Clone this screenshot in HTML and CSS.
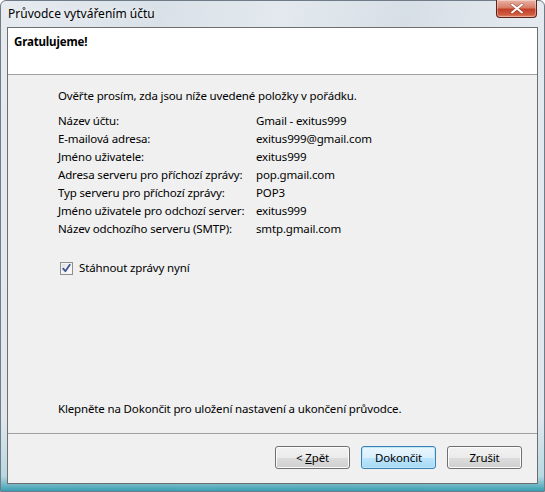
FILE: index.html
```html
<!DOCTYPE html>
<html lang="cs">
<head>
<meta charset="utf-8">
<title>Průvodce vytvářením účtu</title>
<link rel="stylesheet" href="styles.css">
</head>
<body>
<div class="window">
  <div class="titlebar">
    <span class="title">Průvodce vytvářením účtu</span>
    <div class="close" aria-label="Zavřít">
      <svg width="14" height="11" viewBox="0 0 14 11"><path d="M2 1.5 L12 9.5 M12 1.5 L2 9.5" stroke="#6b2a1f" stroke-width="3.2" stroke-linecap="round" opacity="0.45"/><path d="M2 1.5 L12 9.5 M12 1.5 L2 9.5" stroke="#ffffff" stroke-width="2" stroke-linecap="round"/></svg>
    </div>
  </div>
  <div class="client">
    <div class="header">
      <h1 class="heading">Gratulujeme!</h1>
    </div>
    <div class="content">
      <p class="intro">Ověřte prosím, zda jsou níže uvedené položky v pořádku.</p>
      <div class="summary">
        <span>Název účtu:</span><span>Gmail - exitus999</span>
        <span>E-mailová adresa:</span><span>exitus999@gmail.com</span>
        <span>Jméno uživatele:</span><span>exitus999</span>
        <span>Adresa serveru pro příchozí zprávy:</span><span>pop.gmail.com</span>
        <span>Typ serveru pro příchozí zprávy:</span><span>POP3</span>
        <span>Jméno uživatele pro odchozí server:</span><span>exitus999</span>
        <span>Název odchozího serveru (SMTP):</span><span>smtp.gmail.com</span>
      </div>
      <label class="check">
        <span class="box">
          <svg width="11" height="11" viewBox="0 0 11 11"><path d="M2.2 5.6 L4.4 8.2 L8.8 1.8" fill="none" stroke="#3e5596" stroke-width="1.8" stroke-linejoin="round" stroke-linecap="round"/></svg>
        </span>
        <span>Stáhnout zprávy nyní</span>
      </label>
      <p class="finish-note">Klepněte na Dokončit pro uložení nastavení a ukončení průvodce.</p>
    </div>
    <div class="footer">
      <button class="btn">&lt; <u>Z</u>pět</button>
      <button class="btn btn-default">Dokončit</button>
      <button class="btn btn-cancel">Zrušit</button>
    </div>
  </div>
</div>
</body>
</html>
```

FILE: styles.css
```css
* { box-sizing: border-box; }
html, body { margin: 0; padding: 0; }
body {
  width: 545px;
  height: 492px;
  overflow: hidden;
  font-family: "Noto Sans", "Open Sans", sans-serif;
  font-size: 11.5px;
  letter-spacing: -0.15px;
  color: #000;
  background: #ffffff;
}
.window {
  width: 545px;
  height: 492px;
  display: flex;
  flex-direction: column;
  border: 1px solid #6f7b86;
  border-radius: 6px 6px 0 0;
  background:
    linear-gradient(180deg, rgba(255,255,255,0) 85%, rgba(110,190,205,0.35) 97%, #3a9fb2 100%),
    linear-gradient(100deg, #e6ebf0 0%, #d9e1e8 25%, #e3e9ee 45%, #d7dfe6 65%, #e4eaef 85%, #dfe7ee 100%);
}
.titlebar {
  height: 26px;
  flex: none;
  display: flex;
  justify-content: space-between;
  align-items: flex-start;
  padding: 0 7px 0 7px;
}
.title {
  margin-top: 5px;
  font-size: 12px;
  letter-spacing: 0;
  line-height: 16px;
  color: #000;
  text-shadow: 0 0 6px rgba(255,255,255,0.9);
}
.close {
  width: 41px;
  height: 18px;
  margin-top: -1px;
  display: flex;
  align-items: center;
  justify-content: center;
  border: 1px solid #5e2318;
  border-top: none;
  border-radius: 0 0 4px 4px;
  background: linear-gradient(180deg, #e9b3a6 0%, #d77d68 45%, #c2402a 55%, #cf5a3e 85%, #e0866a 100%);
  box-shadow: inset 0 0 0 1px rgba(255,255,255,0.35);
}
.client {
  flex: none;
  height: 457px;
  margin: 0 6px;
  border: 1px solid #6e6e6e;
  display: flex;
  flex-direction: column;
  background: #f0f0f0;
}
.header {
  flex: none;
  height: 47px;
  background: #ffffff;
  border-bottom: 1px solid #a0a0a0;
  padding: 6px 0 0 6px;
}
.heading {
  margin: 0;
  font-size: 11.5px;
  font-weight: bold;
  line-height: 16px;
}
.content {
  flex: 1;
  display: flex;
  flex-direction: column;
  padding: 12px 0 15px 50px;
  border-bottom: 1px solid #a0a0a0;
}
.intro {
  margin: 0 0 7px 0;
  line-height: 18px;
}
.summary {
  display: grid;
  grid-template-columns: 198px auto;
  grid-auto-rows: 18px;
  line-height: 18px;
  white-space: nowrap;
}
.check {
  display: flex;
  align-items: center;
  gap: 6px;
  margin: 21px 0 0 2px;
  line-height: 18px;
}
.box {
  width: 13px;
  height: 13px;
  border: 1px solid #8f8f8f;
  background: linear-gradient(135deg, #dcdcdc 0%, #f6f6f6 60%, #ffffff 100%);
  box-shadow: inset 0 0 0 1px #f4f4f4;
  display: flex;
  align-items: center;
  justify-content: center;
}
.box svg { display: block; }
.finish-note {
  margin: auto 0 0 0;
  line-height: 18px;
}
.footer {
  flex: none;
  height: 49px;
  display: flex;
  justify-content: flex-end;
  align-items: flex-start;
  gap: 11px;
  padding: 12px 15px 0 0;
}
.btn {
  width: 75px;
  height: 23px;
  font-family: inherit;
  font-size: 11.5px;
  letter-spacing: -0.15px;
  color: #000;
  border: 1px solid #707070;
  border-radius: 3px;
  background: linear-gradient(180deg, #f2f2f2 0%, #ebebeb 50%, #dddddd 50%, #cfcfcf 100%);
  box-shadow: inset 0 0 0 1px #fcfcfc;
  padding: 0;
}
.btn u { text-decoration: underline; }
.btn-default {
  border-color: #3c7fb1;
  background: linear-gradient(180deg, #eaf6fd 0%, #d9f0fc 50%, #bee6fd 50%, #a7d9f5 100%);
  box-shadow: inset 0 0 0 1px #bfe7fa;
}
```
